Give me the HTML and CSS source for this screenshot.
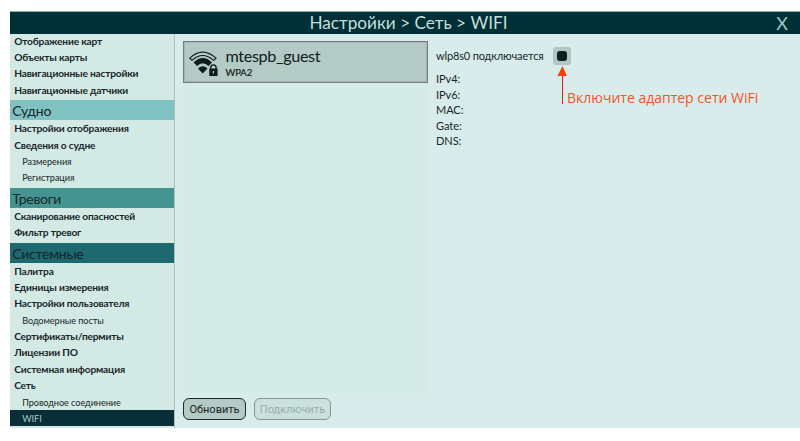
FILE: index.html
```html
<!DOCTYPE html>
<html lang="ru">
<head>
<meta charset="utf-8">
<title>WIFI</title>
<link rel="stylesheet" href="styles.css">
</head>
<body>
<div class="window">
  <header class="titlebar"><h1 class="title">Настройки &gt; Сеть &gt; WIFI</h1><span class="close">X</span></header>
  <div class="body">
    <nav class="sidebar">
      <div class="item">Отображение карт</div>
      <div class="item">Объекты карты</div>
      <div class="item">Навигационные настройки</div>
      <div class="item">Навигационные датчики</div>
      <div class="group light">Судно</div>
      <div class="item">Настройки отображения</div>
      <div class="item">Сведения о судне</div>
      <div class="item sub">Размерения</div>
      <div class="item sub">Регистрация</div>
      <div class="group medium">Тревоги</div>
      <div class="item">Сканирование опасностей</div>
      <div class="item">Фильтр тревог</div>
      <div class="group dark">Системные</div>
      <div class="item">Палитра</div>
      <div class="item">Единицы измерения</div>
      <div class="item">Настройки пользователя</div>
      <div class="item sub">Водомерные посты</div>
      <div class="item">Сертификаты/пермиты</div>
      <div class="item">Лицензии ПО</div>
      <div class="item">Системная информация</div>
      <div class="item">Сеть</div>
      <div class="item sub">Проводное соединение</div>
      <div class="item sub active">WIFI</div>
    </nav>
    <section class="networks">
      <div class="list">
        <div class="network">
          <svg class="wifi" width="30" height="26" viewBox="0 0 30 26">
            <path d="M.8 7.200Q13.500 -4.800 27 7.200L24.700 9.300Q13.500 -.4 3 9.300Z" fill="none" stroke="#101b1b" stroke-width="1.100"/>
            <path d="M4.600 11.400Q13.800 2.600 23 11.400L19.500 15Q13.800 9.600 8.100 15Z" fill="#101b1b"/>
            <path d="M9 17.400Q13.700 13 18.500 17.400L13.700 22.400Z" fill="#101b1b"/>
            <path d="M19.500 15.500h9.500v10h-9.500z" fill="#b4cac5"/>
            <path d="M21.700 18v-1.500a2.700 2.700 0 0 1 5.400 0V18" fill="none" stroke="#101b1b" stroke-width="1.300"/>
            <rect x="20.300" y="17.500" width="8.300" height="7.500" rx=".5" fill="#101b1b"/>
            <path d="M24.400 20v2.500" stroke="#b4cac5" stroke-width="1.200"/>
          </svg>
          <div><div class="ssid">mtespb_guest</div><div class="security">WPA2</div></div>
        </div>
      </div>
      <div class="actions"><button class="button">Обновить</button><button class="button connect" disabled>Подключить</button></div>
    </section>
    <section class="details">
      <div class="adapter"><span class="status">wlp8s0 подключается</span><span class="toggle"><i class="mark"></i></span></div>
      <div class="fields"><div>IPv4:</div><div>IPv6:</div><div>MAC:</div><div>Gate:</div><div>DNS:</div></div>
      <div class="callout">
        <svg class="arrow" width="10" height="38" viewBox="0 0 10 38"><path d="M5.500 8v30" stroke="#f51b16"/><path d="M5.500 0l4.500 10H.5z" fill="#ff3c00"/></svg>
        <span class="hint">Включите адаптер сети WiFi</span>
      </div>
    </section>
  </div>
</div>
</body>
</html>
```

FILE: styles.css
```css
* { box-sizing: border-box; }
body { margin: 0; background: #fff; font-family: Lato, "Noto Sans", sans-serif; color: #182529; overflow: hidden; }
.window { margin: 11px 0 0 10px; width: 790px; height: 417px; display: flex; flex-direction: column; background: #d8edeb; }
.titlebar { height: 23px; flex: none; display: grid; grid-template-columns: 1fr auto 1fr; align-items: center; background: #003037; border-top: 1px solid #93aaa9; color: #c4dfda; }
.title { grid-column: 2; margin: 0 0 0 7px; font-size: 17.200px; font-weight: 400; line-height: 22px; white-space: nowrap; }
.close { justify-self: end; margin-right: 12px; font-size: 18px; line-height: 22px; color: #9ccbc8; }
.body { flex: 1; min-height: 0; display: flex; }
.sidebar { width: 165px; flex: none; overflow: hidden; border-right: 1px solid #aabfba; background: #d2eae3; }
.item { height: 16.400px; padding-left: 4.200px; font-size: 10.200px; font-weight: 700; line-height: 16.400px; letter-spacing: -.2px; white-space: nowrap; }
.item:first-child { margin-top: -1.400px; }
.sub { padding-left: 12.200px; font-size: 9.100px; font-weight: 400; line-height: 17.400px; letter-spacing: -.05px; }
.active { background: #0a2e38; color: #a5cbc9; }
.group { height: 20px; margin-top: 2px; padding-left: 2.200px; font-size: 14px; line-height: 21.500px; letter-spacing: -.25px; }
.light { background: #80c2c1; }
.medium { background: #449492; }
.dark { background: #1e696f; }
.networks { width: 261px; flex: none; padding: 7px 8px 8px 8px; display: flex; flex-direction: column; }
.list { height: 352px; background: #d5ece6; }
.network { height: 42px; padding: 5px 0 0 5px; display: flex; gap: 6.500px; border: 1px solid #787a7b; outline: 1px solid #78777a40; outline-offset: -2px; background: #b4cac5; color: #101b1b; }
.wifi { flex: none; margin-top: 4px; }
.ssid { font-size: 16.200px; line-height: 18px; letter-spacing: -.35px; }
.security { font-size: 9.500px; line-height: 15px; letter-spacing: -.1px; -webkit-text-stroke: .2px; }
.actions { display: flex; gap: 8px; margin-top: 5px; }
.button { width: 63px; height: 22px; padding: 0; border: 1px solid #1a292a; border-radius: 6px; background: #b4cac5; color: #182529; font: 11px Roboto, sans-serif; white-space: nowrap; }
.connect { width: 77px; border-color: #819895; background: #cbe1dd; color: #98aeab; }
.details { position: relative; flex: 1; font-size: 11px; letter-spacing: -.15px; }
.adapter { display: flex; align-items: center; gap: 9px; height: 18px; margin-top: 13px; }
.status { white-space: nowrap; line-height: 16px; margin-top: -1px; }
.toggle { display: grid; place-items: center; width: 18px; height: 18px; border-radius: 3px; background: #b0c6c4; }
.mark { width: 10px; height: 10px; border-radius: 3px; background: #0c1e1d; }
.fields { margin-top: 6px; line-height: 15.600px; letter-spacing: -.05px; }
.callout { position: absolute; left: 121px; top: 32px; display: flex; color: #f3531f; }
.arrow { flex: none; }
.hint { margin-top: 22px; font: 14px/20px "Open Sans", sans-serif; letter-spacing: 0; white-space: nowrap; }
```
